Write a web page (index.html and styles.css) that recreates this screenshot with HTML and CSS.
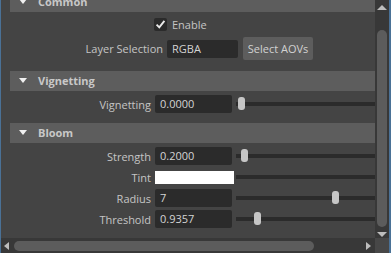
FILE: index.html
```html
<!DOCTYPE html>
<html lang="en">
<head>
  <meta charset="UTF-8">
  <title>Attribute editor</title>
  <link rel="stylesheet" href="styles.css">
</head>
<body>

<div class="window">
  <div class="main">
    <div class="viewport">

      <section class="frame common">
        <div class="frame-head"><span class="tri"></span>Common</div>
        <div class="frame-body">
          <div class="row-check">
            <span class="check">
              <svg width="13" height="13" viewBox="0 0 13 13"><path d="M2.6 6.6 L5.3 9.4 L10.4 2.9" fill="none" stroke="#ececec" stroke-width="1.9"/></svg>
            </span>
            <span>Enable</span>
          </div>
          <div class="row-layer">
            <label>Layer Selection</label>
            <div class="field">RGBA</div>
            <button>Select AOVs</button>
          </div>
        </div>
      </section>

      <section class="frame">
        <div class="frame-head"><span class="tri"></span>Vignetting</div>
        <div class="frame-body">
          <div class="row">
            <label>Vignetting</label>
            <div class="field">0.0000</div>
            <div class="slider"><span class="handle" style="left: 2px"></span></div>
          </div>
        </div>
      </section>

      <section class="frame">
        <div class="frame-head"><span class="tri"></span>Bloom</div>
        <div class="frame-body">
          <div class="row">
            <label>Strength</label>
            <div class="field">0.2000</div>
            <div class="slider"><span class="handle" style="left: 5px"></span></div>
          </div>
          <div class="row">
            <label>Tint</label>
            <div class="swatch"></div>
            <div class="slider"></div>
          </div>
          <div class="row">
            <label>Radius</label>
            <div class="field">7</div>
            <div class="slider"><span class="handle" style="left: 96px"></span></div>
          </div>
          <div class="row">
            <label>Threshold</label>
            <div class="field">0.9357</div>
            <div class="slider"><span class="handle" style="left: 18px"></span></div>
          </div>
        </div>
      </section>

    </div>
    <div class="vscroll">
      <span class="arrow up"></span>
      <span class="vthumb"></span>
      <span class="arrow down"></span>
    </div>
  </div>
  <div class="bottom">
    <div class="hscroll">
      <span class="arrow left"></span>
      <div class="htrack"><span class="hthumb"></span></div>
      <span class="arrow right"></span>
    </div>
    <div class="corner"></div>
  </div>
</div>

</body>
</html>
```

FILE: styles.css
```css
body {
  margin: 0;
  background: #444444;
  font-family: "Open Sans", "Liberation Sans", Arial, sans-serif;
  font-size: 11px;
  color: #c4c4c4;
}

.window {
  width: 388px;
  height: 253px;
  border-left: 1px solid #4a7196;
  border-right: 2px solid #4a7196;
  display: flex;
  flex-direction: column;
  overflow: hidden;
}
.main {
  display: flex;
  height: 238px;
}
.viewport {
  flex: 1;
  overflow: hidden;
}

/* frames */
.frame-head {
  margin-left: 9px;
  height: 20px;
  line-height: 20px;
  background: #5d5d5d;
  font-weight: bold;
  color: #c8c8c8;
  display: flex;
  align-items: center;
  padding-left: 9px;
}
.tri {
  width: 0;
  height: 0;
  border-left: 4px solid transparent;
  border-right: 4px solid transparent;
  border-top: 5px solid #f0f0f0;
  margin-right: 11px;
  margin-top: -2px;
}
.frame-body {
  padding: 4px 0 10px;
  display: flex;
  flex-direction: column;
  gap: 3px;
}
.common { margin-top: -8px; }
.common .frame-body { padding: 3px 0 11px; }

label { text-align: right; }

.row-check {
  height: 19px;
  display: flex;
  align-items: center;
  padding-left: 153px;
  gap: 5px;
}
.check {
  width: 13px;
  height: 13px;
  background: #2b2b2b;
  border-radius: 2px;
  display: flex;
}
.row-layer {
  height: 23px;
  display: grid;
  grid-template-columns: 162px 71px 71px;
  column-gap: 4px;
  align-items: center;
}
.row-layer button {
  margin-left: 1px;
  height: 23px;
  border: none;
  border-radius: 2px;
  background: #5d5d5d;
  color: #d2d2d2;
  font-family: inherit;
  font-size: 11px;
  padding: 0;
}

.row {
  height: 18px;
  display: grid;
  grid-template-columns: 150px 77px 1fr;
  column-gap: 4px;
  align-items: center;
}
.field {
  height: 18px;
  line-height: 18px;
  background: #2b2b2b;
  border-radius: 2px;
  padding-left: 5px;
  color: #d4d4d4;
}
.swatch {
  width: 79px;
  height: 13px;
  background: #ffffff;
}
.slider {
  position: relative;
  height: 4px;
  background: #2b2b2b;
}
.handle {
  position: absolute;
  top: -5px;
  width: 7px;
  height: 13px;
  border-radius: 3px;
  background: #c6c6c6;
}

/* scrollbars */
.vscroll {
  width: 14px;
  background: #383838;
  display: flex;
  flex-direction: column;
  align-items: center;
}
.arrow {
  width: 0;
  height: 0;
}
.arrow.up {
  margin-top: 5px;
  border-left: 5px solid transparent;
  border-right: 5px solid transparent;
  border-bottom: 5px solid #bdbdbd;
}
.vthumb {
  margin-top: 20px;
  width: 10px;
  height: 197px;
  border-radius: 5px;
  background: #5c5c5c;
}
.arrow.down {
  margin-top: 5px;
  border-left: 5px solid transparent;
  border-right: 5px solid transparent;
  border-top: 5px solid #bdbdbd;
}

.bottom {
  display: flex;
  height: 15px;
}
.hscroll {
  flex: 1;
  background: #383838;
  display: flex;
  align-items: center;
  padding: 0 4px 0 3px;
}
.arrow.left {
  border-top: 4px solid transparent;
  border-bottom: 4px solid transparent;
  border-right: 5px solid #bdbdbd;
}
.arrow.right {
  border-top: 4px solid transparent;
  border-bottom: 4px solid transparent;
  border-left: 5px solid #bdbdbd;
}
.htrack {
  flex: 1;
  padding-left: 5px;
}
.hthumb {
  display: block;
  width: 300px;
  height: 10px;
  border-radius: 5px;
  background: #5c5c5c;
}
.corner {
  width: 14px;
  background: #474747;
}
```
